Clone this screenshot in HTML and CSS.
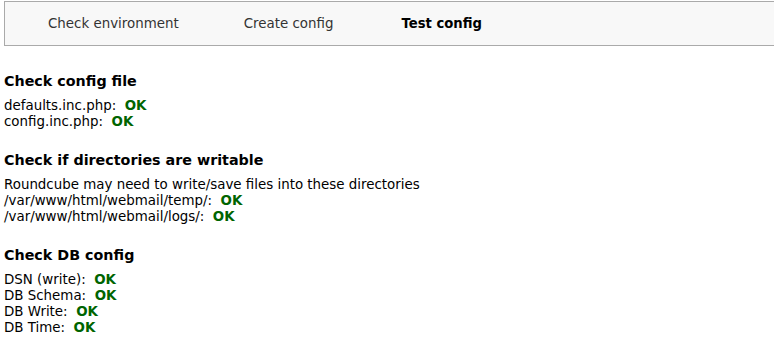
FILE: index.html
```
<!DOCTYPE html>
<html lang="en">
<head>
  <meta charset="UTF-8" />
  <title>Roundcube Webmail Installer</title>
  <link rel="stylesheet" href="styles.css">
</head>
<body>
  <ol id="progress">
    <li class="passed">Check environment</li>
    <li class="passed">Create config</li>
    <li class="current">Test config</li>
  </ol>

  <h3>Check config file</h3>
  <p>
    defaults.inc.php:&nbsp; <span class="success">OK</span><br>
    config.inc.php:&nbsp; <span class="success">OK</span>
  </p>

  <h3>Check if directories are writable</h3>
  <p>
    Roundcube may need to write/save files into these directories<br>
    /var/www/html/webmail/temp/:&nbsp; <span class="success">OK</span><br>
    /var/www/html/webmail/logs/:&nbsp; <span class="success">OK</span>
  </p>

  <h3>Check DB config</h3>
  <p>
    DSN (write):&nbsp; <span class="success">OK</span><br>
    DB Schema:&nbsp; <span class="success">OK</span><br>
    DB Write:&nbsp; <span class="success">OK</span><br>
    DB Time:&nbsp; <span class="success">OK</span>
  </p>
</body>
</html>
```

FILE: styles.css
```
body {
  margin: 0;
  padding: 1px 0 0 4px;
  background: white;
  color: #000;
  font-family: "DejaVu Sans", Verdana, sans-serif;
  font-size: 13.4px;
  line-height: 16px;
  overflow: hidden;
}

#progress {
  list-style: none;
  margin: 0 -10px 26px 0;
  padding: 0;
  display: flex;
  border: 1px solid #aaa;
  background: #f8f8f8;
  height: 43px;
  align-items: center;
}

#progress li {
  color: #333;
}

#progress li:nth-child(1) {
  margin-left: 43px;
}

#progress li:nth-child(2) {
  margin-left: 65px;
}

#progress li:nth-child(3) {
  margin-left: 68px;
}

#progress li.current {
  color: #000;
  font-weight: bold;
  font-size: 13.2px;
}

h3 {
  font-size: 14.3px;
  margin: 21px 0 8px;
  line-height: 18px;
}

#progress + h3 {
  margin-top: 0;
}

p {
  margin: 0;
}

.success {
  color: #006400;
  font-weight: bold;
}
```
